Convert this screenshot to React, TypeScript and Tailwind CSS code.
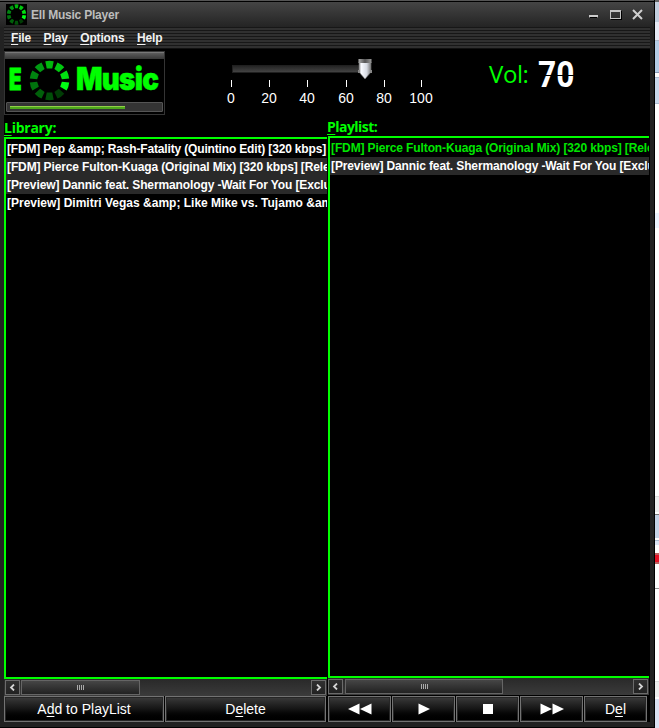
import React from "react";

const sans = "font-['Liberation_Sans',Arial,sans-serif]";
const ringColors = ["#00b80c", "#00c90f", "#00e010", "#00ff14", "#003d05", "#005008", "#00600a", "#00720d", "#008510", "#009b12"];

function Ring({ className }: { className: string }) {
  return (
    <svg viewBox="0 0 44 42" preserveAspectRatio="none" className={className}>
      {ringColors.map((color, i) => (
        <path key={color} d="M17.7 1.2 Q22 .2 26.3 1.2 L24.8 8.6 H19.2 Z" fill={color} transform={`rotate(${i * 36} 22 21)`} />
      ))}
    </svg>
  );
}

function Key({ before = "", letter, after = "" }: { before?: string; letter: string; after?: string }) {
  return <span>{before}<span className="underline underline-offset-2 decoration-1">{letter}</span>{after}</span>;
}

function Arrow({ right = false }: { right?: boolean }) {
  return (
    <div className="flex h-[15px] w-[15px] shrink-0 items-center justify-center border border-[#6b6b6b] bg-linear-to-b from-[#303030] to-[#222]">
      <svg width="7" height="7" viewBox="0 0 7 7">
        <path d={right ? "M2 .5L5 3.5L2 6.5" : "M5 .5L2 3.5L5 6.5"} fill="none" stroke="#d4d4d4" strokeWidth="1.8" />
      </svg>
    </div>
  );
}

function ScrollBar({ wide = false }: { wide?: boolean }) {
  return (
    <div className="flex h-[17px] justify-between bg-linear-to-b from-[#292929] to-[#3b3b3b] pr-px pt-px">
      <div className={`flex gap-px ${wide ? "" : "pl-px"}`}>
        <Arrow />
        <div className={`flex h-[15px] items-center justify-center gap-px border border-[#656565] bg-linear-to-b from-[#464646] to-[#222] ${wide ? "ml-px w-[158px]" : "w-[119px]"}`}>
          {[0, 1, 2, 3].map((n) => <i key={n} className="h-[5px] w-px bg-[#aaa]" />)}
        </div>
      </div>
      <Arrow right />
    </div>
  );
}

const buttonStyle = "flex h-[26px] items-center justify-center border border-[#737373] bg-linear-to-b from-[#3b3b3b] via-[#151515] to-black text-[14px] leading-none text-white shadow-[inset_0_0_0_1px_#262626]";

function Triangle({ left = false }: { left?: boolean }) {
  return <svg width="12" height="12" viewBox="0 0 12 12"><path d={left ? "M11.5 0.5L0 6L11.5 11.5Z" : "M.5 0.5L12 6L.5 11.5Z"} fill="white" /></svg>;
}

function Slider() {
  return (
    <div className="relative h-[68px] w-[230px]">
      <div className="absolute left-[12px] top-[16px] h-2 w-[136px] border border-[#202020] bg-linear-to-b from-[#242424] to-[#444]" />
      <svg className="absolute left-[138px] top-[9px]" width="14" height="22" viewBox="0 0 14 22">
        <defs><linearGradient id="thumb"><stop stopColor="#999" /><stop offset=".2" stopColor="#f8faff" /><stop offset=".65" stopColor="#d6dae2" /><stop offset="1" stopColor="#777" /></linearGradient><linearGradient id="cap"><stop stopColor="#aaa" /><stop offset=".5" stopColor="#555" /><stop offset="1" stopColor="#999" /></linearGradient></defs>
        <path d="M1 4H13V14L7 21L1 14Z" fill="url(#thumb)" stroke="#777" strokeWidth=".6" />
        <path d="M.5 1H13.5V5H.5Z" fill="url(#cap)" />
        <path d="M0 12H2V15H0ZM12 12H14V15H12Z" fill="#888" />
      </svg>
      {[
        [10, 0], [48, 20], [86, 40], [125, 60], [163, 80], [200, 100],
      ].map(([x, value]) => (
        <div key={value} className="absolute top-[31px] flex w-10 -translate-x-1/2 flex-col items-center text-[14px] leading-4 text-white" style={{ left: x + 1 }}>
          <i className="mb-[3px] h-[7px] w-px bg-white" />{value}
        </div>
      ))}
    </div>
  );
}

function Volume() {
  return (
    <div className="flex">
      <span className="pt-[11px] font-['Open_Sans','Noto_Sans',sans-serif] text-[24px] leading-[28px] tracking-[-.4px] text-[#00ff00]">Vol:</span>
      <div className="relative ml-[9px] mt-[6px] h-[40px] w-[44px]">
        <span className="block origin-left scale-x-[.88] font-['Roboto',sans-serif] text-[36px] font-bold leading-[40px] text-white">70</span>
        <i className="absolute left-0 top-[20px] h-px w-full bg-black" />
      </div>
    </div>
  );
}

function Row({ children, active = false, alternate = false, tracking = "tracking-[-.12px]" }: { children: React.ReactNode; active?: boolean; alternate?: boolean; tracking?: string }) {
  return <div className={`h-[18px] overflow-hidden whitespace-nowrap pl-px text-[12px] font-bold leading-[19px] ${tracking} ${active ? "text-[#00e600]" : "text-white"} ${alternate ? "bg-[#292929]" : "bg-black"}`}>{children}</div>;
}

export default function App() {
  return (
    <main className={`flex h-[728px] w-[659px] overflow-hidden bg-black ${sans}`}>
      <section className="flex h-[728px] w-[654px] flex-col border-y border-t-[#555] border-b-black bg-[#222]">
        <header className="flex h-[26px] items-center border-t border-black bg-linear-to-b from-[#454545] to-[#242424] pl-[6px]">
          <div className="h-[21px] w-[21px] bg-black"><Ring className="h-full w-full" /></div>
          <h1 className="ml-1 pt-px text-[12px] font-bold leading-none tracking-[-.22px] text-[#bdbdbd]">Ell Music Player</h1>
          <div className="ml-auto mr-[11px] flex items-center">
            <i className="mr-[12px] mt-1 h-[3px] w-[9px] border border-b-black border-x-[#ccc] border-t-[#ccc] bg-[#ccc]" />
            <i className="mr-[11px] h-[9px] w-[11px] border border-t-2 border-[#c3c3c3] shadow-[1px_1px_black]" />
            <svg width="11" height="11" viewBox="0 0 11 11"><path d="M1 1L10 10M10 1L1 10" stroke="#d0d0d0" strokeWidth="2" /></svg>
          </div>
        </header>
        <nav className="ml-[4px] mr-[4px] flex h-[21px] items-center gap-[12.5px] bg-[repeating-linear-gradient(to_bottom,#171717_0px,#171717_1px,#303030_1px,#303030_3px)] pl-[7px] text-[12px] font-bold leading-none tracking-[-.15px] text-[#f2f2f2]">
          <Key letter="F" after="ile" /><Key letter="P" after="lay" /><Key letter="O" after="ptions" /><Key letter="H" after="elp" />
        </nav>
        <div className="ml-[4px] mr-[4px] flex min-h-0 flex-1 flex-col bg-black">
          <div className="flex h-[69px] border-t border-[#111]">
            <div className="mt-[2px] h-[64px] w-[161px] border border-[#343434] bg-black">
              <div className="h-[7px] border-t border-[#777] bg-linear-to-b from-[#5c5c5c] to-[#373737]" />
              <div className="flex h-[42px] items-center text-[#00ff00]">
                <span className="-mt-[3px] ml-[4px] w-[18px] font-['Inter',sans-serif] text-[30px] font-black leading-[36px] [-webkit-text-stroke:1px_#00ff00]"><span className="inline-block origin-left scale-x-[.68]">E</span></span>
                <Ring className="ml-px h-[41px] w-[43px] shrink-0" />
                <span className="-mt-[3px] ml-[5px] origin-left scale-x-[.895] font-['Inter',sans-serif] text-[31px] font-black leading-[36px] tracking-[-.8px] [-webkit-text-stroke:.5px_#00ff00]">Music</span>
              </div>
              <div className="mx-[1px] mt-[1px] flex h-[10px] items-center rounded-[1px] border border-[#555] bg-[#343434] pl-[3px]"><div className="h-[3px] w-[115px] border-t border-[#91cf48] bg-[#4da71b]" /></div>
            </div>
            <div className="ml-[55px]"><Slider /></div>
            <div className="ml-[39px]"><Volume /></div>
          </div>
          <div className="flex min-h-0 flex-1">
            <section className="mr-px flex w-[323px] min-w-0 flex-col">
              <h2 className="h-[20px] pt-px font-['Open_Sans','Noto_Sans',sans-serif] text-[14px] font-bold leading-[20px] tracking-[-.25px] text-[#00ff00]"><Key letter="L" after="ibrary:" /></h2>
              <div className="h-[542px] overflow-hidden border-y-2 border-l-2 border-[#00ff00] bg-black pt-px">
                <Row tracking="tracking-[-.16px]">[FDM] Pep &amp;amp; Rash-Fatality (Quintino Edit) [320 kbps]</Row>
                <Row alternate>[FDM] Pierce Fulton-Kuaga (Original Mix) [320 kbps] [Release]</Row>
                <Row alternate>[Preview] Dannic feat. Shermanology -Wait For You [Exclusive]</Row>
                <Row tracking="tracking-normal">[Preview] Dimitri Vegas &amp;amp; Like Mike vs. Tujamo &amp;amp;</Row>
              </div>
              <ScrollBar />
              <div className="flex gap-px bg-black"><div className={`${buttonStyle} w-[160px]`}><Key before="A" letter="d" after="d to PlayList" /></div><div className={`${buttonStyle} w-[161px]`}><Key before="D" letter="e" after="lete" /></div></div>
            </section>
            <section className="flex w-[321px] min-w-0 flex-col">
              <h2 className="-ml-px h-[19px] font-['Open_Sans','Noto_Sans',sans-serif] text-[14px] font-bold leading-[19px] tracking-[-.55px] text-[#00ff00]"><Key letter="P" after="laylist:" /></h2>
              <div className="h-[542px] overflow-hidden border-y-2 border-l-2 border-[#00ff00] bg-black pt-px">
                <Row active>[FDM] Pierce Fulton-Kuaga (Original Mix) [320 kbps] [Release]</Row>
                <Row alternate>[Preview] Dannic feat. Shermanology -Wait For You [Exclusive]</Row>
              </div>
              <ScrollBar wide />
              <div className="mt-px flex gap-px bg-black">
                <div className={`${buttonStyle} w-[63px]`}><Triangle left /><Triangle left /></div>
                <div className={`${buttonStyle} w-[63px]`}><Triangle /></div>
                <div className={`${buttonStyle} w-[63px]`}><i className="h-[10px] w-[10px] bg-white" /></div>
                <div className={`${buttonStyle} w-[63px]`}><Triangle /><Triangle /></div>
                <div className={`${buttonStyle} w-[63px]`}><Key before="D" letter="e" after="l" /></div>
              </div>
            </section>
          </div>
        </div>
        <div className="h-[5px] bg-[#222]" />
      </section>
      <aside className="flex w-[5px] flex-col border-l border-black bg-white">
        <i className="h-[22px] border-t-2 border-[#666] bg-[#c2cede]" /><i className="h-[19px] border-b border-[#aeb8c9] bg-[#e7eaf5]" />
        <i className="h-[32px] border-b border-[#8798b5] bg-[#b5cce5]" /><i className="mt-[4px] h-[27px] border-y border-[#aebdd3] bg-[#cad9ec]" />
        <i className="mt-[109px] h-[15px] bg-[#edf4ff]" />
        <i className="mt-[268px] h-[16px] border-t border-[#ddd] bg-[#eee]" />
        <i className="mt-[2px] h-[24px] border-t border-[#777] bg-[#c5d2e5]" />
        <i className="mt-[2px] h-[5px] border-t border-[#aabbd0] bg-[#dce4f4]" />
        <i className="mt-[8px] h-[11px] border-y-2 border-[#bf6060] bg-[#e41428]" />
        <i className="mt-[24px] h-px bg-[#999]" /><i className="mt-[92px] h-[16px] border-t border-[#ddd] bg-[#eee]" />
        <i className="mt-[2px] flex-1 bg-[#dce2f3]" />
      </aside>
    </main>
  );
}
